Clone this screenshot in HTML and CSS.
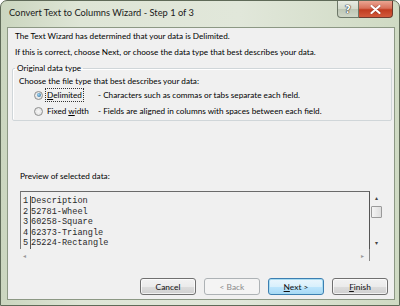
FILE: index.html
```html
<!DOCTYPE html>
<html>
<head>
<meta charset="utf-8">
<link rel="stylesheet" href="styles.css">
</head>
<body>
<div class="window">
  <div class="titlebar">
    <span class="title">Convert Text to Columns Wizard - Step 1 of 3</span>
    <div class="caption">
      <div class="cbtn help">?</div>
      <div class="cbtn close">
        <svg width="11" height="9" viewBox="0 0 11 9"><path d="M1.5 1 L9.5 8 M9.5 1 L1.5 8" stroke="#5a1a10" stroke-width="3.4" stroke-linecap="round" opacity="0.35"/><path d="M1.5 1 L9.5 8 M9.5 1 L1.5 8" stroke="#fff" stroke-width="2.2" stroke-linecap="round"/></svg>
      </div>
    </div>
  </div>
  <div class="client">
    <p class="line first">The Text Wizard has determined that your data is Delimited.</p>
    <p class="line second">If this is correct, choose Next, or choose the data type that best describes your data.</p>
    <fieldset class="group">
      <legend>Original data type</legend>
      <p class="line choose">Choose the file type that best describes your data:</p>
      <div class="option">
        <span class="radio checked"></span>
        <span class="opt-label"><span class="focus"><u>D</u>elimited</span></span>
        <span class="desc">- Characters such as commas or tabs separate each field.</span>
      </div>
      <div class="option">
        <span class="radio"></span>
        <span class="opt-label">Fixed <u>w</u>idth</span>
        <span class="desc">- Fields are aligned in columns with spaces between each field.</span>
      </div>
    </fieldset>
    <p class="line preview-label">Preview of selected data:</p>
    <div class="preview">
      <div class="data">
        <div class="rows">
          <div class="row"><span class="num">1</span><span class="cell">Description</span></div>
          <div class="row"><span class="num">2</span><span class="cell">52781-Wheel</span></div>
          <div class="row"><span class="num">3</span><span class="cell">60258-Square</span></div>
          <div class="row"><span class="num">4</span><span class="cell">62373-Triangle</span></div>
          <div class="row"><span class="num">5</span><span class="cell">25224-Rectangle</span></div>
        </div>
        <div class="hscroll"><span class="arr">&#9666;</span><span class="arr">&#9656;</span></div>
      </div>
      <div class="vscroll">
        <span class="varr">&#9652;</span>
        <span class="thumb"></span>
        <span class="spacer"></span>
        <span class="varr">&#9662;</span>
      </div>
    </div>
    <div class="buttons">
      <button class="btn">Cancel</button>
      <button class="btn disabled">&lt; Back</button>
      <button class="btn default"><u>N</u>ext &gt;</button>
      <button class="btn"><u>F</u>inish</button>
    </div>
  </div>
</div>
</body>
</html>
```
FILE: styles.css
```css
* { box-sizing: border-box; }
html, body { margin: 0; padding: 0; background: #fff; }
body { width: 400px; height: 306px; overflow: hidden; }

.window {
  width: 400px;
  height: 306px;
  border: 1px solid #5f6a58;
  border-radius: 7px 7px 0 0;
  background: linear-gradient(90deg, #cbd6bf 0%, #dee5d6 20%, #e1e7da 60%, #cfdac3 100%);
  display: flex;
  flex-direction: column;
  font-family: Lato, "Noto Sans", sans-serif;
  color: #000;
}

.titlebar {
  height: 26px;
  display: flex;
  align-items: flex-start;
  justify-content: space-between;
  padding-left: 8px;
}
.title {
  font-size: 9.3px;
  line-height: 12px;
  margin-top: 6px;
  color: #1a1a1a;
}
.caption { display: flex; margin-right: 6px; }
.cbtn {
  height: 17px;
  display: flex;
  align-items: center;
  justify-content: center;
  border: 1px solid #6d7868;
  border-top: none;
}
.help {
  width: 22px;
  border-radius: 0 0 0 4px;
  background: linear-gradient(#e8ece4 0%, #d3dacb 50%, #bdc6b4 51%, #cfd6c7 100%);
  font-family: "DejaVu Sans", sans-serif;
  font-size: 10px;
  color: #fff;
  font-weight: bold;
  text-shadow: 0 0 1px #333, 0 0 1px #333, 0 0 1px #333;
}
.close {
  width: 34px;
  border-left: none;
  border-radius: 0 0 4px 0;
  background: linear-gradient(#eba592 0%, #d8715a 45%, #c13c20 55%, #d35a3c 100%);
  border-color: #6e3a2e;
}

.client {
  flex: 1;
  margin: 0 4px 5px 6px;
  border: 1px solid #8c9884;
  background: #f0f0f0;
  display: flex;
  flex-direction: column;
  padding: 2px 2px 4px 4px;
  font-size: 8.2px;
}

.line { margin: 0; line-height: 12px; white-space: nowrap; }
.first { padding-left: 3px; }
.second { padding-left: 3px; margin-top: 4px; }

.group {
  margin: 4px 0 0 0;
  padding: 1px 0 1px 0;
  border: 1px solid #d0d6d9;
  border-radius: 2px;
  box-shadow: inset 1px 1px 0 #fff;
}
.group legend {
  margin-left: 2px;
  padding: 0 2px;
  line-height: 12px;
}
.choose { padding-left: 6px; }
.option {
  display: flex;
  align-items: center;
  height: 16px;
  padding-left: 21px;
}
.radio {
  width: 9px;
  height: 9px;
  border-radius: 50%;
  border: 1px solid #8e8f8f;
  background: radial-gradient(circle, #f7f7f7, #dcdcdc);
  position: relative;
  flex: none;
}
.radio.checked::after {
  content: "";
  position: absolute;
  left: 1.5px;
  top: 1.5px;
  width: 4px;
  height: 4px;
  border-radius: 50%;
  background: radial-gradient(circle at 40% 40%, #9fd6f6, #1f5d8c);
}
.opt-label { width: 55px; padding-left: 4px; flex: none; }
.focus { outline: 1px dotted #333; outline-offset: 1px; }

.preview-label { margin-top: 49px; padding-left: 8px; }

.preview {
  margin: 9px 9px 0 8px;
  display: flex;
  height: 70px;
}
.data {
  flex: 1;
  display: flex;
  flex-direction: column;
}
.rows {
  height: 58px;
  border-top: 1px solid #6a6a6a;
  border-left: 1px solid #7a7a7a;
  border-right: 1px solid #555;
  padding-top: 4px;
  font-family: "Liberation Mono", "Courier New", monospace;
  font-size: 8.6px;
  color: #2a2a2a;
}
.row { display: flex; height: 10.5px; line-height: 10.5px; }
.num {
  width: 10px;
  text-align: center;
  border-right: 1px solid #555;
}
.hscroll {
  flex: 1;
  display: flex;
  justify-content: space-between;
  align-items: center;
  padding: 0 5px 0 3px;
  font-size: 6px;
  color: #999;
  border-right: 1px solid #888;
}
.vscroll {
  width: 13px;
  display: flex;
  flex-direction: column;
  align-items: center;
  padding-top: 3px;
  font-size: 6px;
  color: #444;
}
.varr { line-height: 8px; }
.thumb {
  width: 11px;
  height: 12px;
  margin-top: 4px;
  border: 1px solid #9a9a9a;
  border-radius: 1px;
  background: linear-gradient(90deg, #f4f4f4, #dedede);
}
.spacer { flex: 1; max-height: 21px; }

.buttons {
  margin-top: auto;
  display: flex;
  justify-content: flex-end;
  gap: 8px;
  padding-right: 4px;
}
.btn {
  width: 56px;
  height: 17px;
  padding: 0;
  font-family: Lato, "Noto Sans", sans-serif;
  font-size: 8.4px;
  line-height: 12px;
  color: #111;
  border: 1px solid #707070;
  border-radius: 3px;
  background: linear-gradient(#f2f2f2 0%, #ebebeb 50%, #dddddd 51%, #cfcfcf 100%);
  box-shadow: inset 0 0 0 1px rgba(255,255,255,0.7);
}
.btn.disabled {
  color: #8a8a8a;
  border-color: #adb2b5;
  background: #f4f4f4;
  box-shadow: none;
}
.btn.default {
  border-color: #3c7fb1;
  box-shadow: inset 0 0 0 1px #a8dcf2;
  background: linear-gradient(#eaf6fd 0%, #d9f0fc 50%, #bee6fd 51%, #a7d9f5 100%);
}
```
